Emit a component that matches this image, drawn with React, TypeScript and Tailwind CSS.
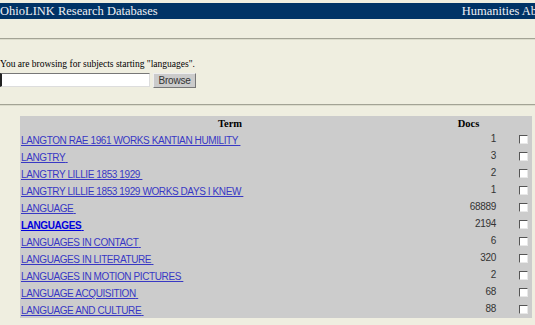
import React from "react";

const rows: { term: string; docs: string; bold?: boolean }[] = [
  { term: "LANGTON RAE 1961 WORKS KANTIAN HUMILITY", docs: "1" },
  { term: "LANGTRY", docs: "3" },
  { term: "LANGTRY LILLIE 1853 1929", docs: "2" },
  { term: "LANGTRY LILLIE 1853 1929 WORKS DAYS I KNEW", docs: "1" },
  { term: "LANGUAGE", docs: "68889" },
  { term: "LANGUAGES", docs: "2194", bold: true },
  { term: "LANGUAGES IN CONTACT", docs: "6" },
  { term: "LANGUAGES IN LITERATURE", docs: "320" },
  { term: "LANGUAGES IN MOTION PICTURES", docs: "2" },
  { term: "LANGUAGE ACQUISITION", docs: "68" },
  { term: "LANGUAGE AND CULTURE", docs: "88" },
];

const serif = { fontFamily: '"Liberation Serif", "Times New Roman", serif' };
const sans = { fontFamily: '"Liberation Sans", Arial, sans-serif' };

function Box() {
  return (
    <div className="w-[9px] h-[9px] bg-white border-t border-l border-t-[#555] border-l-[#555] border-b border-r border-b-[#e8e8e8] border-r-[#e8e8e8]" />
  );
}

export default function App() {
  return (
    <div className="w-[535px] h-[325px] overflow-hidden bg-[#efeee0] relative">
      <div className="pt-[3px]">
        <div
          className="w-[569px] h-[16px] bg-[#003366] flex items-center justify-between text-[12.5px] leading-[16px] text-[#eef0f4]"
          style={serif}
        >
          <span>OhioLINK Research Databases</span>
          <span>Humanities Abstracts</span>
        </div>
      </div>
      <div className="mt-[19px] border-t border-t-[#a3a395] border-b border-b-[#dcdccc]" />
      <div className="mt-[19px] text-[9.5px] leading-[11px] text-black" style={serif}>
        You are browsing for subjects starting "languages".
      </div>
      <div className="flex items-start gap-[3px] mt-[3px]">
        <div className="w-[150px] h-[14px] bg-white border-l-2 border-l-[#222] border-t border-t-[#777] border-b border-b-[#ddd] border-r border-r-[#ddd]" />
        <div
          className="w-[43px] h-[15px] bg-[#cbcbcb] border border-[#eee] border-r-[#777] border-b-[#777] flex items-center justify-center text-[10px] text-[#333] tracking-[-0.2px]"
          style={sans}
        >
          Browse
        </div>
      </div>
      <div className="mt-[16px] border-t border-t-[#a3a395] border-b border-b-[#dcdccc]" />
      <div className="ml-[20px] mt-[10px] w-[512px] bg-[#cccccc]">
        <div className="flex h-[15px] items-center text-[10.5px] font-bold text-black" style={serif}>
          <div className="w-[420px] text-center">Term</div>
          <div className="w-[57px] text-center">Docs</div>
        </div>
        {rows.map((r) => (
          <div key={r.term} className="flex h-[17px] items-center">
            <div className="w-[420px] pl-[1px] leading-[12px]">
              <a
                href="#"
                className={
                  "underline text-[10px] tracking-[-0.4px] " +
                  (r.bold ? "font-bold text-[#0000dd]" : "text-[#3838c4]")
                }
                style={sans}
              >
                {r.term}{"\u00a0"}
              </a>
            </div>
            <div
              className="w-[57px] pr-[1px] text-right text-[10px] tracking-[-0.3px] leading-[12px] text-[#333] -mt-[1px]"
              style={sans}
            >
              {r.docs}
            </div>
            <div className="pl-[22px]">
              <Box />
            </div>
          </div>
        ))}
      </div>
    </div>
  );
}
